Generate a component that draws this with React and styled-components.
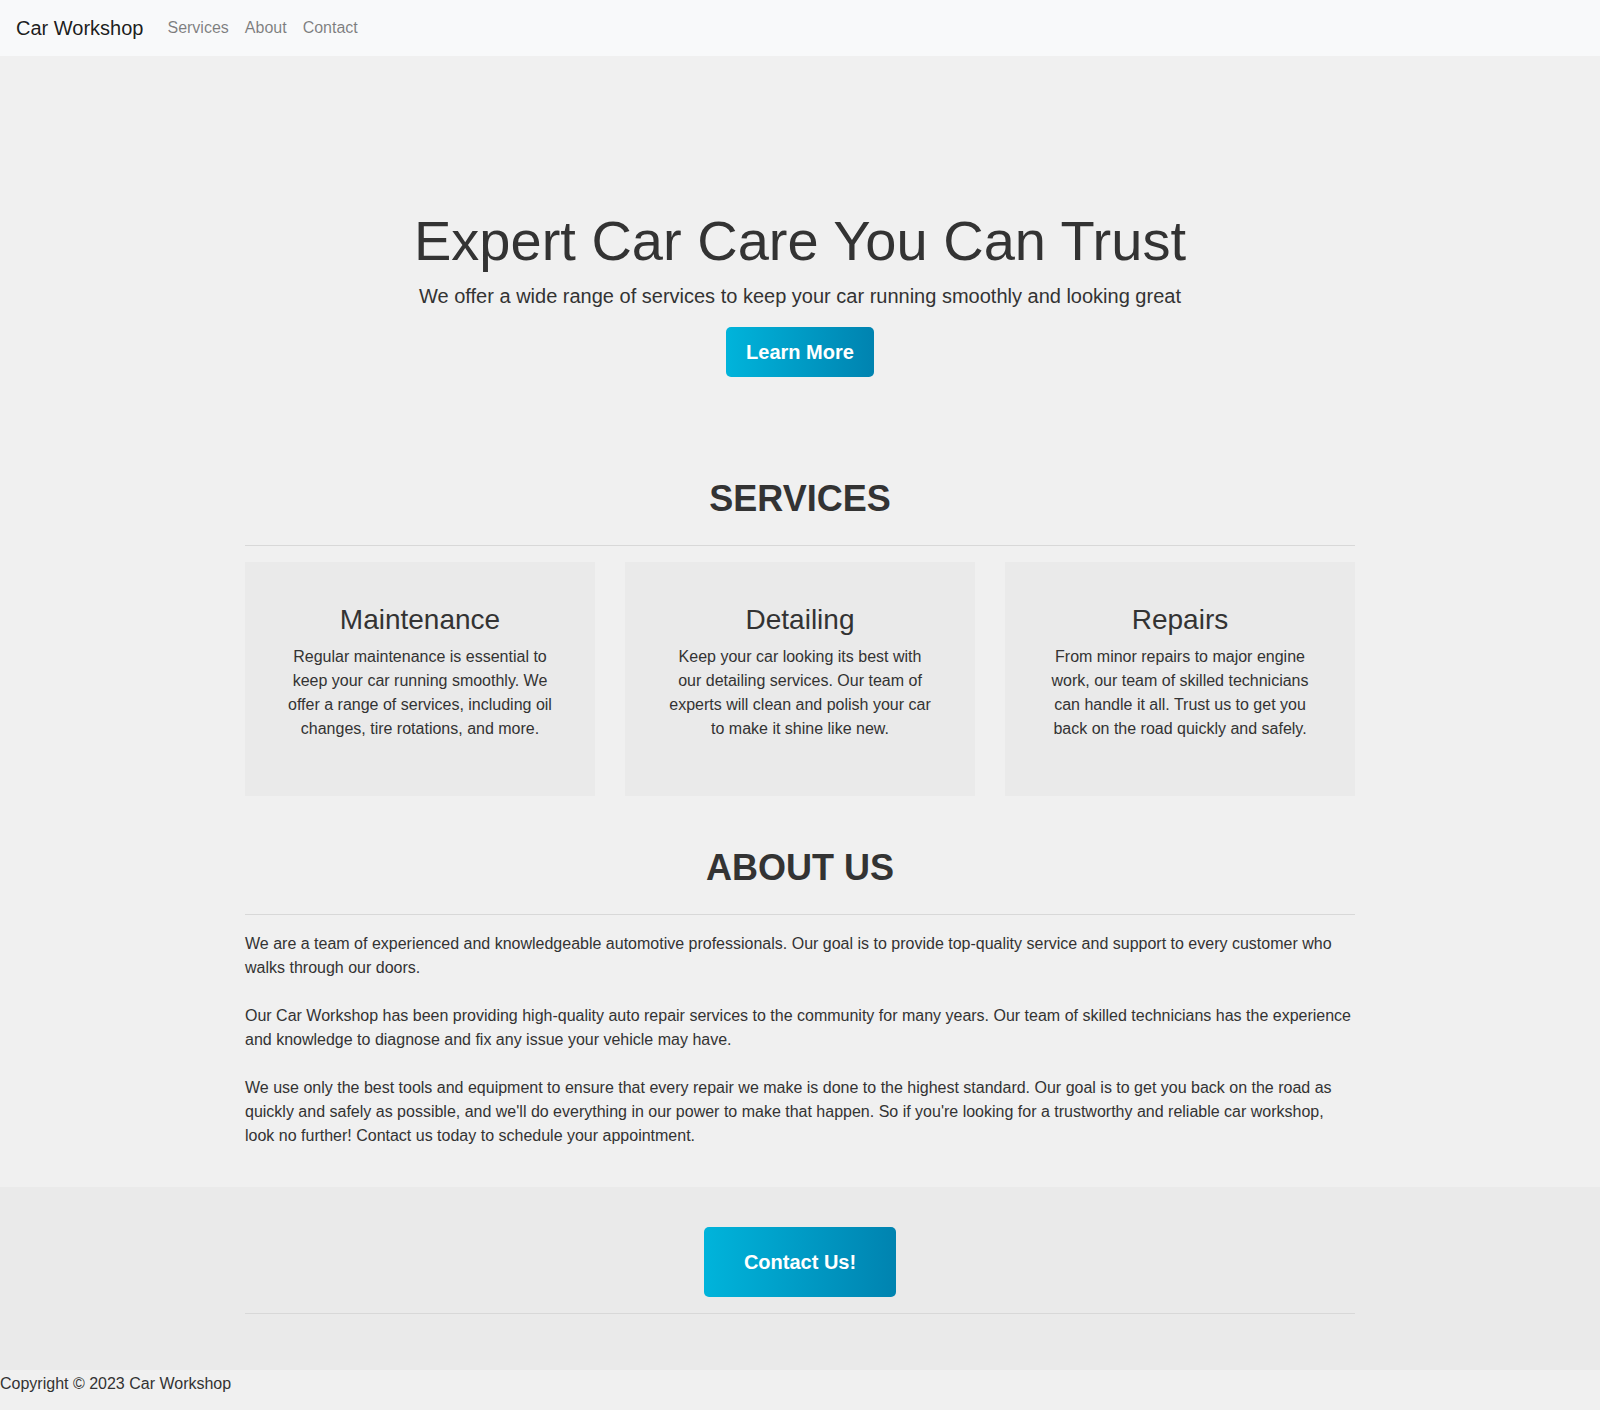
import React from 'react'
import styled, { createGlobalStyle } from 'styled-components'

const GlobalStyle = createGlobalStyle`
  * {
    box-sizing: border-box;
  }
  body {
    margin: 0;
    background: #f0f0f0;
    color: #333;
    font-family: "Liberation Sans", Arial, sans-serif;
    font-size: 16px;
    line-height: 1.5;
  }
`

const Navbar = styled.nav`
  display: flex;
  align-items: center;
  height: 56px;
  padding: 8px 16px;
  background: #f8f9fa;
`

const Brand = styled.a`
  font-size: 20px;
  line-height: 30px;
  color: rgba(0, 0, 0, 0.9);
  text-decoration: none;
  margin-right: 16px;
`

const NavList = styled.div`
  display: flex;
`

const NavLink = styled.a`
  padding: 8px;
  color: rgba(0, 0, 0, 0.5);
  text-decoration: none;
`

const Container = styled.div`
  width: 1110px;
  margin: 0 auto;
`

const Hero = styled.header`
  padding: 151px 0 100px;
  text-align: center;
`

const HeroTitle = styled.h1`
  margin: 0 0 7px;
  font-size: 56px;
  font-weight: 400;
  line-height: 1.2;
`

const Lead = styled.p`
  margin: 0 0 16px;
  font-size: 20px;
  line-height: 30px;
`

const GradientButton = styled.a`
  display: inline-block;
  padding: ${p => (p.$big ? '20px 40px' : '10px 20px')};
  border-radius: 5px;
  background: linear-gradient(to right, #00b4db, #0083b0);
  color: #fff;
  font-size: 20px;
  font-weight: 700;
  line-height: 30px;
  text-decoration: none;
`

const SectionTitle = styled.h2`
  margin: 0 0 25px;
  font-size: 36px;
  font-weight: 700;
  line-height: 1.2;
  text-transform: uppercase;
  text-align: center;
`

const Rule = styled.hr`
  margin: 0 0 ${p => p.$after || 16}px;
  border: 0;
  border-top: 1px solid #d8d8d8;
`

const Cards = styled.div`
  display: grid;
  grid-template-columns: repeat(3, 1fr);
  gap: 30px;
  margin-bottom: 50px;
`

const Card = styled.div`
  padding: 41px 40px 39px;
  background: #eaeaea;
  text-align: center;
`

const CardTitle = styled.h3`
  margin: 0 0 8px;
  font-size: 28px;
  font-weight: 400;
  line-height: 1.2;
`

const CardText = styled.p`
  margin: 0 0 16px;
`

const About = styled.section`
  padding-bottom: 15px;
`

const AboutText = styled.p`
  margin: 0 0 24px;
`

const Footer = styled.footer`
  padding: 40px 0 56px;
  background: #eaeaea;
  text-align: center;
`

const FooterRule = styled.hr`
  margin: 16px 0 0;
  border: 0;
  border-top: 1px solid #d8d8d8;
`

const Copyright = styled.p`
  margin: 2px 0 0;
`

const services = [
  {
    title: 'Maintenance',
    text: 'Regular maintenance is essential to keep your car running smoothly. We offer a range of services, including oil changes, tire rotations, and more.'
  },
  {
    title: 'Detailing',
    text: 'Keep your car looking its best with our detailing services. Our team of experts will clean and polish your car to make it shine like new.'
  },
  {
    title: 'Repairs',
    text: 'From minor repairs to major engine work, our team of skilled technicians can handle it all. Trust us to get you back on the road quickly and safely.'
  }
]

const App = () => (
  <>
    <GlobalStyle />
    <Navbar>
      <Brand href='#'>Car Workshop</Brand>
      <NavList>
        <NavLink href='#services'>Services</NavLink>
        <NavLink href='#about'>About</NavLink>
        <NavLink href='#contact'>Contact</NavLink>
      </NavList>
    </Navbar>

    <Container>
      <Hero>
        <HeroTitle>Expert Car Care You Can Trust</HeroTitle>
        <Lead>We offer a wide range of services to keep your car running smoothly and looking great</Lead>
        <GradientButton href='#services'>Learn More</GradientButton>
      </Hero>

      <section id='services'>
        <SectionTitle>Services</SectionTitle>
        <Rule />
        <Cards>
          {services.map(s => (
            <Card key={s.title}>
              <CardTitle>{s.title}</CardTitle>
              <CardText>{s.text}</CardText>
            </Card>
          ))}
        </Cards>
      </section>

      <About id='about'>
        <SectionTitle>About Us</SectionTitle>
        <Rule $after={17} />
        <AboutText>
          We are a team of experienced and knowledgeable automotive professionals. Our goal is to provide top-quality service and support to every customer who walks through our doors.
        </AboutText>
        <AboutText>
          Our Car Workshop has been providing high-quality auto repair services to the community for many years. Our team of skilled technicians has the experience and knowledge to diagnose and fix any issue your vehicle may have.
        </AboutText>
        <AboutText>
          We use only the best tools and equipment to ensure that every repair we make is done to the highest standard. Our goal is to get you back on the road as quickly and safely as possible, and we'll do everything in our power to make that happen. So if you're looking for a trustworthy and reliable car workshop, look no further! Contact us today to schedule your appointment.
        </AboutText>
      </About>
    </Container>

    <Footer id='contact'>
      <Container>
        <GradientButton $big href='#'>Contact Us!</GradientButton>
        <FooterRule />
      </Container>
    </Footer>
    <Copyright>Copyright © 2023 Car Workshop</Copyright>
  </>
)

export default App
